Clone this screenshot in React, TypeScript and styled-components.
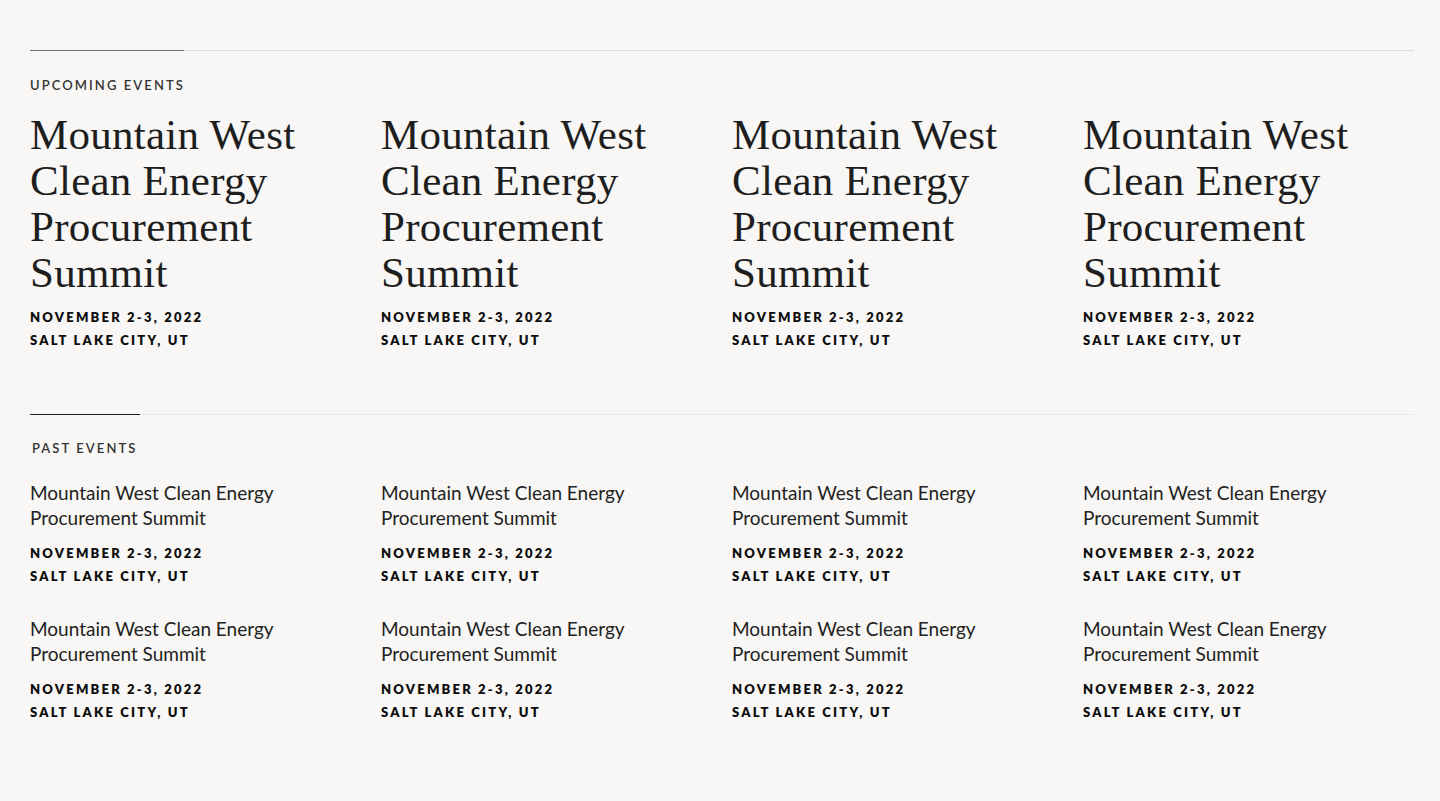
import React from "react";
import styled, { createGlobalStyle } from "styled-components";

const Global = createGlobalStyle`
  html, body { margin: 0; padding: 0; background: #f8f7f5; }
  body { font-family: Lato, "Noto Sans", sans-serif; color: #111; }
`;

const Page = styled.main`
  padding: 50px 26px 60px 30px;
  display: flex;
  flex-direction: column;
  gap: 62px;
`;

const Section = styled.section`
  display: flex;
  flex-direction: column;
`;

const Rule = styled.div<{ $accent: string; $accentWidth: number; $line: string }>`
  position: relative;
  height: 1px;
  background: ${(p) => p.$line};
  &::before {
    content: "";
    position: absolute;
    left: 0;
    top: 0;
    height: 1px;
    width: ${(p) => p.$accentWidth}px;
    background: ${(p) => p.$accent};
  }
`;

const Label = styled.h2<{ $indent: number; $before: number; $after: number }>`
  margin: ${(p) => p.$before}px 0 ${(p) => p.$after}px ${(p) => p.$indent}px;
  font-family: Lato, sans-serif;
  font-size: 13px;
  line-height: 16px;
  font-weight: 600;
  letter-spacing: 0.16em;
  color: #333;
  text-transform: uppercase;
`;

const Grid = styled.div<{ $rowGap: number }>`
  display: grid;
  grid-template-columns: repeat(4, 1fr);
  column-gap: 20px;
  row-gap: ${(p) => p.$rowGap}px;
`;

const Card = styled.article`
  display: flex;
  flex-direction: column;
`;

const BigTitle = styled.h3`
  margin: 0 0 10px;
  font-family: "Liberation Serif", "Times New Roman", serif;
  font-weight: 400;
  font-size: 43px;
  line-height: 46px;
  letter-spacing: 0.25px;
  color: #1e1e1e;
`;

const SmallTitle = styled.h3`
  margin: 0 0 12px;
  font-family: Lato, sans-serif;
  font-weight: 400;
  font-size: 19px;
  line-height: 25px;
  color: #222;
`;

const Meta = styled.p`
  margin: 0;
  font-family: Lato, sans-serif;
  font-weight: 800;
  font-size: 13px;
  line-height: 23px;
  letter-spacing: 0.17em;
  color: #0d0d0d;
  text-transform: uppercase;
`;

const TITLE = "Mountain West Clean Energy Procurement Summit";

const Event = ({ big }: { big?: boolean }) => (
  <Card>
    {big ? <BigTitle>{TITLE}</BigTitle> : <SmallTitle>{TITLE}</SmallTitle>}
    <Meta>November 2-3, 2022</Meta>
    <Meta>Salt Lake City, UT</Meta>
  </Card>
);

export default function App() {
  return (
    <>
      <Global />
      <Page>
        <Section>
          <Rule $accent="#6e6e6e" $accentWidth={154} $line="#dddbd8" />
          <Label $indent={0} $before={26} $after={19}>Upcoming Events</Label>
          <Grid $rowGap={30}>
            {[0, 1, 2, 3].map((i) => (
              <Event big key={i} />
            ))}
          </Grid>
        </Section>
        <Section>
          <Rule $accent="#1e1e1e" $accentWidth={110} $line="#ebe9e6" />
          <Label $indent={2} $before={25} $after={24}>Past Events</Label>
          <Grid $rowGap={28}>
            {Array.from({ length: 8 }).map((_, i) => (
              <Event key={i} />
            ))}
          </Grid>
        </Section>
      </Page>
    </>
  );
}
